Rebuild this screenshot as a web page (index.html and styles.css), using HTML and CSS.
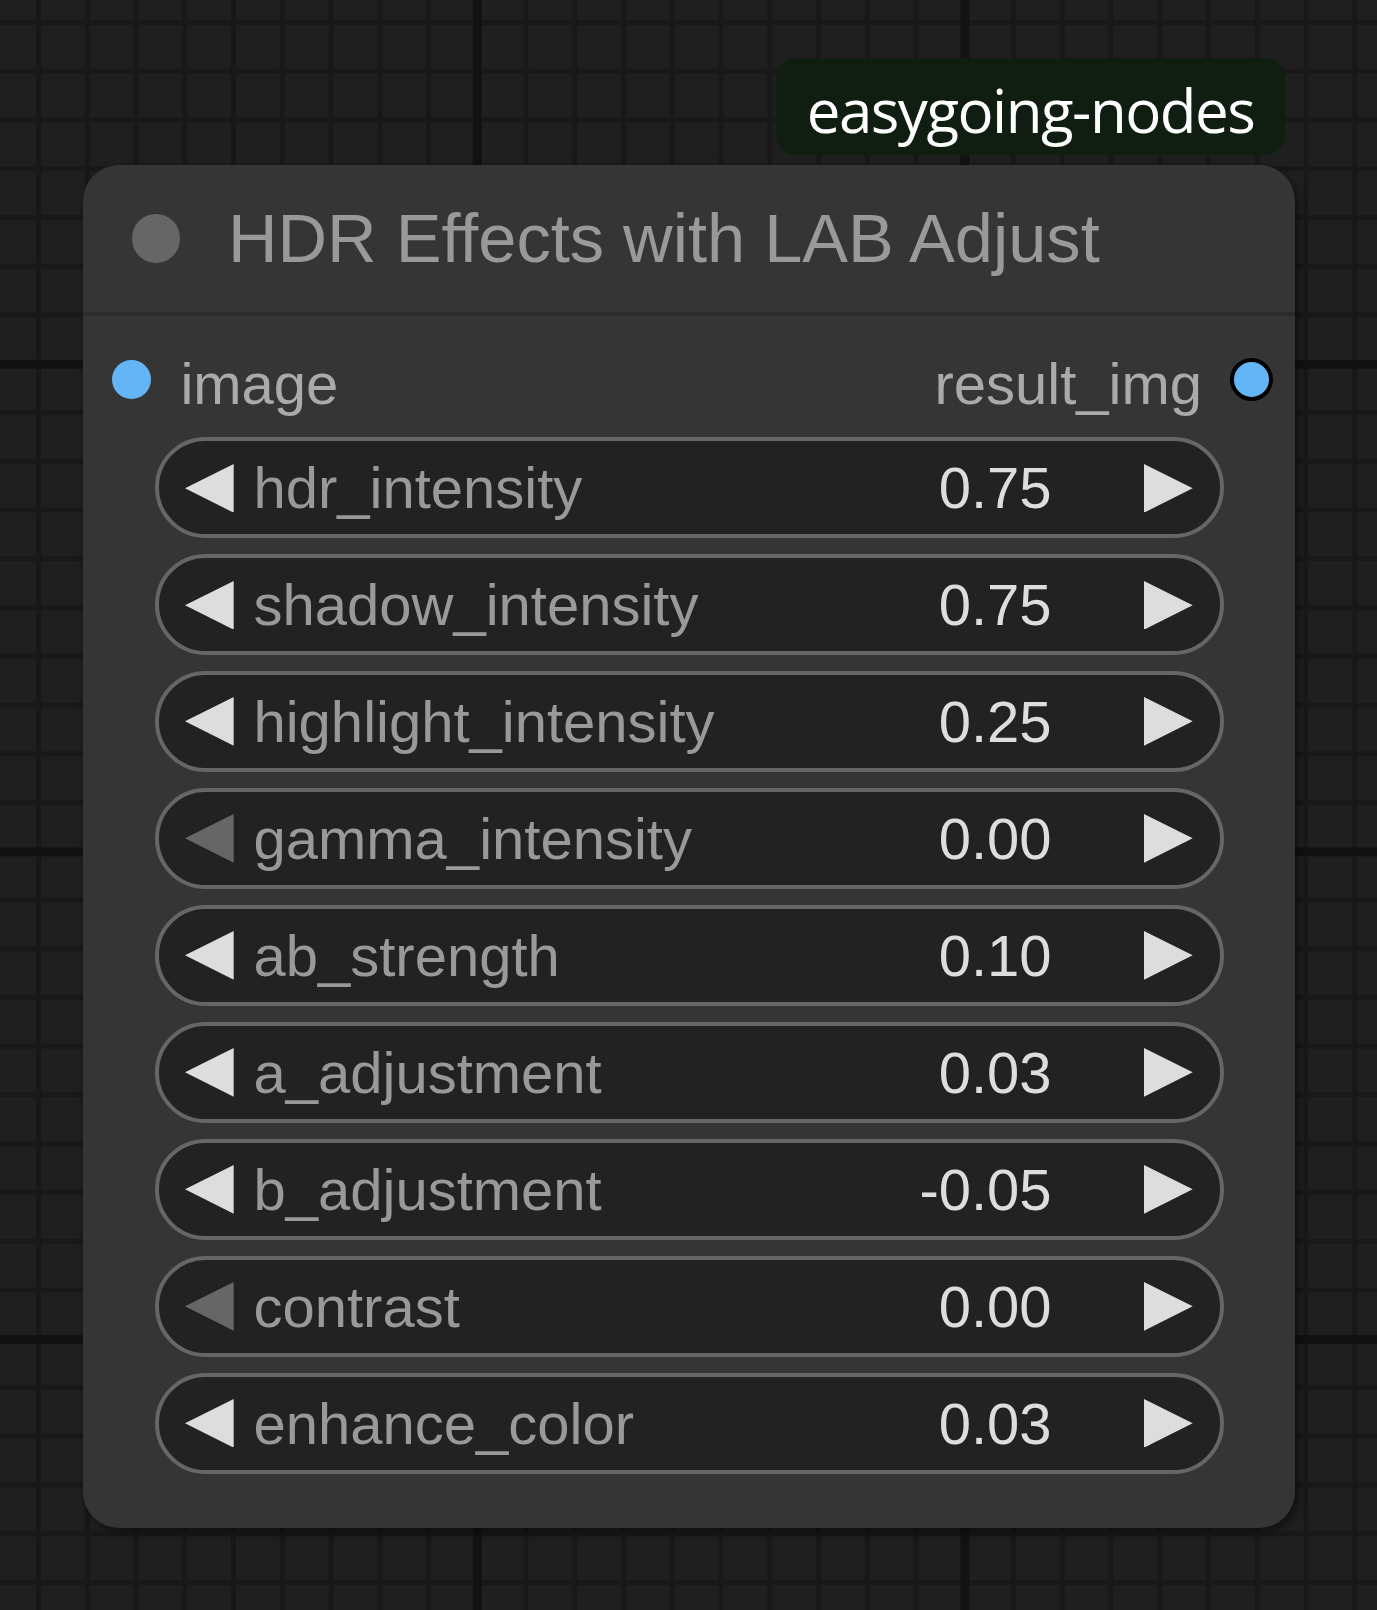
FILE: index.html
```html
<!DOCTYPE html>
<html lang="en">
<head>
<meta charset="utf-8">
<title>HDR Effects with LAB Adjust</title>
<link rel="stylesheet" href="styles.css">
</head>
<body>
<div class="canvas">
  <div class="node-wrap">
    <div class="badge"><span class="badge-text">easygoing-nodes</span></div>
    <div class="node">
      <div class="title">
        <span class="title-dot"></span>
        <span class="title-text">HDR Effects with LAB Adjust</span>
      </div>
      <div class="node-body">
        <div class="slots">
          <div class="slot slot-in"><span class="dot in-dot"></span><span class="slot-label">image</span></div>
          <div class="slot slot-out"><span class="slot-label">result_img</span><span class="dot out-dot"></span></div>
        </div>
        <div class="widgets">
          <div class="widget">
            <svg class="arrow" viewBox="0 0 10 10"><polygon points="10,0 0,5 10,10"/></svg>
            <span class="w-label">hdr_intensity</span><span class="w-value">0.75</span>
            <svg class="arrow" viewBox="0 0 10 10"><polygon points="0,0 10,5 0,10"/></svg>
          </div>
          <div class="widget">
            <svg class="arrow" viewBox="0 0 10 10"><polygon points="10,0 0,5 10,10"/></svg>
            <span class="w-label">shadow_intensity</span><span class="w-value">0.75</span>
            <svg class="arrow" viewBox="0 0 10 10"><polygon points="0,0 10,5 0,10"/></svg>
          </div>
          <div class="widget">
            <svg class="arrow" viewBox="0 0 10 10"><polygon points="10,0 0,5 10,10"/></svg>
            <span class="w-label">highlight_intensity</span><span class="w-value">0.25</span>
            <svg class="arrow" viewBox="0 0 10 10"><polygon points="0,0 10,5 0,10"/></svg>
          </div>
          <div class="widget">
            <svg class="arrow arrow-off" viewBox="0 0 10 10"><polygon points="10,0 0,5 10,10"/></svg>
            <span class="w-label">gamma_intensity</span><span class="w-value">0.00</span>
            <svg class="arrow" viewBox="0 0 10 10"><polygon points="0,0 10,5 0,10"/></svg>
          </div>
          <div class="widget">
            <svg class="arrow" viewBox="0 0 10 10"><polygon points="10,0 0,5 10,10"/></svg>
            <span class="w-label">ab_strength</span><span class="w-value">0.10</span>
            <svg class="arrow" viewBox="0 0 10 10"><polygon points="0,0 10,5 0,10"/></svg>
          </div>
          <div class="widget">
            <svg class="arrow" viewBox="0 0 10 10"><polygon points="10,0 0,5 10,10"/></svg>
            <span class="w-label">a_adjustment</span><span class="w-value">0.03</span>
            <svg class="arrow" viewBox="0 0 10 10"><polygon points="0,0 10,5 0,10"/></svg>
          </div>
          <div class="widget">
            <svg class="arrow" viewBox="0 0 10 10"><polygon points="10,0 0,5 10,10"/></svg>
            <span class="w-label">b_adjustment</span><span class="w-value">-0.05</span>
            <svg class="arrow" viewBox="0 0 10 10"><polygon points="0,0 10,5 0,10"/></svg>
          </div>
          <div class="widget">
            <svg class="arrow arrow-off" viewBox="0 0 10 10"><polygon points="10,0 0,5 10,10"/></svg>
            <span class="w-label">contrast</span><span class="w-value">0.00</span>
            <svg class="arrow" viewBox="0 0 10 10"><polygon points="0,0 10,5 0,10"/></svg>
          </div>
          <div class="widget">
            <svg class="arrow" viewBox="0 0 10 10"><polygon points="10,0 0,5 10,10"/></svg>
            <span class="w-label">enhance_color</span><span class="w-value">0.03</span>
            <svg class="arrow" viewBox="0 0 10 10"><polygon points="0,0 10,5 0,10"/></svg>
          </div>
        </div>
      </div>
    </div>
  </div>
</div>
</body>
</html>
```
FILE: styles.css
```css
html, body {
  margin: 0;
  padding: 0;
}

body {
  min-height: 1610px;
  background-color: #1f1f1f;
  background-image:
    linear-gradient(to right, #121212 9px, transparent 9px),
    linear-gradient(to bottom, #121212 9px, transparent 9px),
    linear-gradient(to right, #181818 5px, transparent 5px),
    linear-gradient(to bottom, #181818 5px, transparent 5px);
  background-size:
    487.6px 487.6px,
    487.6px 487.6px,
    48.76px 48.76px,
    48.76px 48.76px;
  background-position:
    472.8px 0,
    0 359.8px,
    36px 0,
    0 20px;
  font-family: "Liberation Sans", Arial, sans-serif;
}

.canvas {
  padding: 58px 0 0 83px;
}

.node-wrap {
  width: 1212px;
  display: flex;
  flex-direction: column;
}

.badge {
  align-self: flex-end;
  margin-right: 10px;
  margin-bottom: 10px;
  width: 509px;
  height: 97px;
  border-radius: 20px;
  background: #0f1e11;
  display: flex;
  align-items: center;
  justify-content: center;
}

.badge-text {
  font-family: "Open Sans", "Noto Sans", sans-serif;
  font-size: 60px;
  color: #ffffff;
  letter-spacing: -1.5px;
  padding-top: 6px;
  white-space: nowrap;
}

.node {
  height: 1363px;
  border-radius: 36px;
  background: #353535;
  box-shadow: 3px 4px 8px rgba(0, 0, 0, 0.5);
  display: flex;
  flex-direction: column;
}

.title {
  height: 147px;
  border-bottom: 4px solid #2c2c2c;
  display: flex;
  align-items: center;
}

.title-dot {
  flex: none;
  width: 48.7px;
  height: 48.7px;
  border-radius: 50%;
  background: #666666;
  margin-left: 48.6px;
  margin-right: 47.7px;
}

.title-text {
  font-size: 68.6px;
  color: #999999;
  white-space: nowrap;
}

.node-body {
  padding-top: 14.8px;
}

.slots {
  height: 97.4px;
  display: flex;
  justify-content: space-between;
  align-items: center;
}

.slot {
  display: flex;
  align-items: center;
}

.slot-label {
  font-size: 58px;
  color: #aaaaaa;
  padding-top: 7.8px;
  white-space: nowrap;
}

.dot {
  flex: none;
  border-radius: 50%;
  background: #64b5f6;
}

.in-dot {
  width: 39px;
  height: 39px;
  margin-left: 29.2px;
  margin-right: 29.2px;
}

.out-dot {
  width: 35px;
  height: 35px;
  border: 4px solid #000000;
  margin-left: 27.5px;
  margin-right: 22.5px;
}

.widgets {
  margin: 9.3px 0 0 71.5px;
  width: 1069px;
  display: flex;
  flex-direction: column;
  gap: 15.9px;
}

.widget {
  box-sizing: border-box;
  height: 101px;
  border: 4px solid #666666;
  border-radius: 51px;
  background: #222222;
  display: flex;
  align-items: center;
  padding: 0 26.7px;
}

.arrow {
  flex: none;
  width: 48.7px;
  height: 48.7px;
  fill: #dddddd;
}

.arrow-off {
  fill: #666666;
}

.w-label {
  flex: 1;
  margin-left: 19.6px;
  font-size: 58px;
  color: #999999;
  white-space: nowrap;
}

.w-value {
  margin-right: 92.5px;
  font-size: 58px;
  color: #dddddd;
  white-space: nowrap;
}
```
